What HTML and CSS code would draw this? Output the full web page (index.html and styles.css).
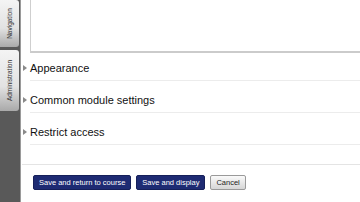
FILE: index.html
```html
<!DOCTYPE html>
<html lang="en">
<head>
    <meta charset="UTF-8">
    <title>Edit settings</title>
    <link rel="stylesheet" href="styles.css">
</head>
<body>
    <div class="page">
        <div class="dock">
            <div class="tab tab-nav"><span>Navigation</span></div>
            <div class="tab tab-admin"><span>Administration</span></div>
        </div>
        <div class="main">
            <div class="editor"></div>
            <div class="section"><div class="legend"><span class="arrow"></span>Appearance</div></div>
            <div class="section"><div class="legend"><span class="arrow"></span>Common module settings</div></div>
            <div class="section"><div class="legend"><span class="arrow"></span>Restrict access</div></div>
            <div class="buttons">
                <button class="btn primary">Save and return to course</button>
                <button class="btn primary">Save and display</button>
                <button class="btn cancel">Cancel</button>
            </div>
        </div>
    </div>
</body>
</html>
```

FILE: styles.css
```css
* {
    padding: 0;
    margin: 0;
    box-sizing: border-box;
}

html,
body {
    width: 100%;
    height: 100%;
    overflow: hidden;
}

body {
    font-family: "Liberation Sans", Arial, sans-serif;
    background: #fff;
}

.page {
    display: flex;
    height: 100%;
}

.dock {
    width: 21px;
    flex-shrink: 0;
    background-color: #595959;
    border-right: 1px solid #9a9a9a;
    display: flex;
    flex-direction: column;
    gap: 3px;
}

.tab {
    width: 19px;
    background: linear-gradient(to bottom, #f4f4f4 0%, #e2e2e2 60%, #a9a9a9 100%);
    border-radius: 0 3px 3px 0;
    display: flex;
    align-items: center;
    justify-content: center;
    overflow: hidden;
}

.tab span {
    transform: rotate(-90deg);
    font-size: 6.5px;
    color: #333;
    white-space: nowrap;
}

.tab-nav {
    height: 47px;
}

.tab-admin {
    height: 61px;
}

.main {
    flex: 1;
    padding-left: 1px;
}

.editor {
    height: 53px;
    margin-left: 8px;
    border-left: 1px solid #cfcfcf;
    border-bottom: 2px solid #cbcbcb;
}

.section {
    height: 32px;
    padding-top: 5px;
    margin-left: 8px;
}

.legend {
    height: 23px;
    padding-bottom: 2px;
    border-bottom: 1px solid #ececec;
    font-size: 11px;
    color: #111;
    display: flex;
    align-items: center;
    position: relative;
}

.arrow {
    position: absolute;
    left: -7px;
    width: 0;
    height: 0;
    border-left: 4px solid #8a8a8a;
    border-top: 3px solid transparent;
    border-bottom: 3px solid transparent;
}

.buttons {
    margin-top: 15px;
    border-top: 1px solid #e4e4e4;
    padding: 10px 0 0 11px;
    display: flex;
    gap: 5px;
}

.btn {
    font-family: "Liberation Sans", Arial, sans-serif;
    font-size: 7.5px;
    height: 15px;
    border-radius: 2px;
    padding: 0 5px;
}

.primary {
    background: #1e2b73;
    color: #fff;
    border: 1px solid #16205a;
}

.cancel {
    background: linear-gradient(to bottom, #fafafa, #d6d6d6);
    color: #222;
    border: 1px solid #9a9a9a;
    padding: 0 5px;
}
```
